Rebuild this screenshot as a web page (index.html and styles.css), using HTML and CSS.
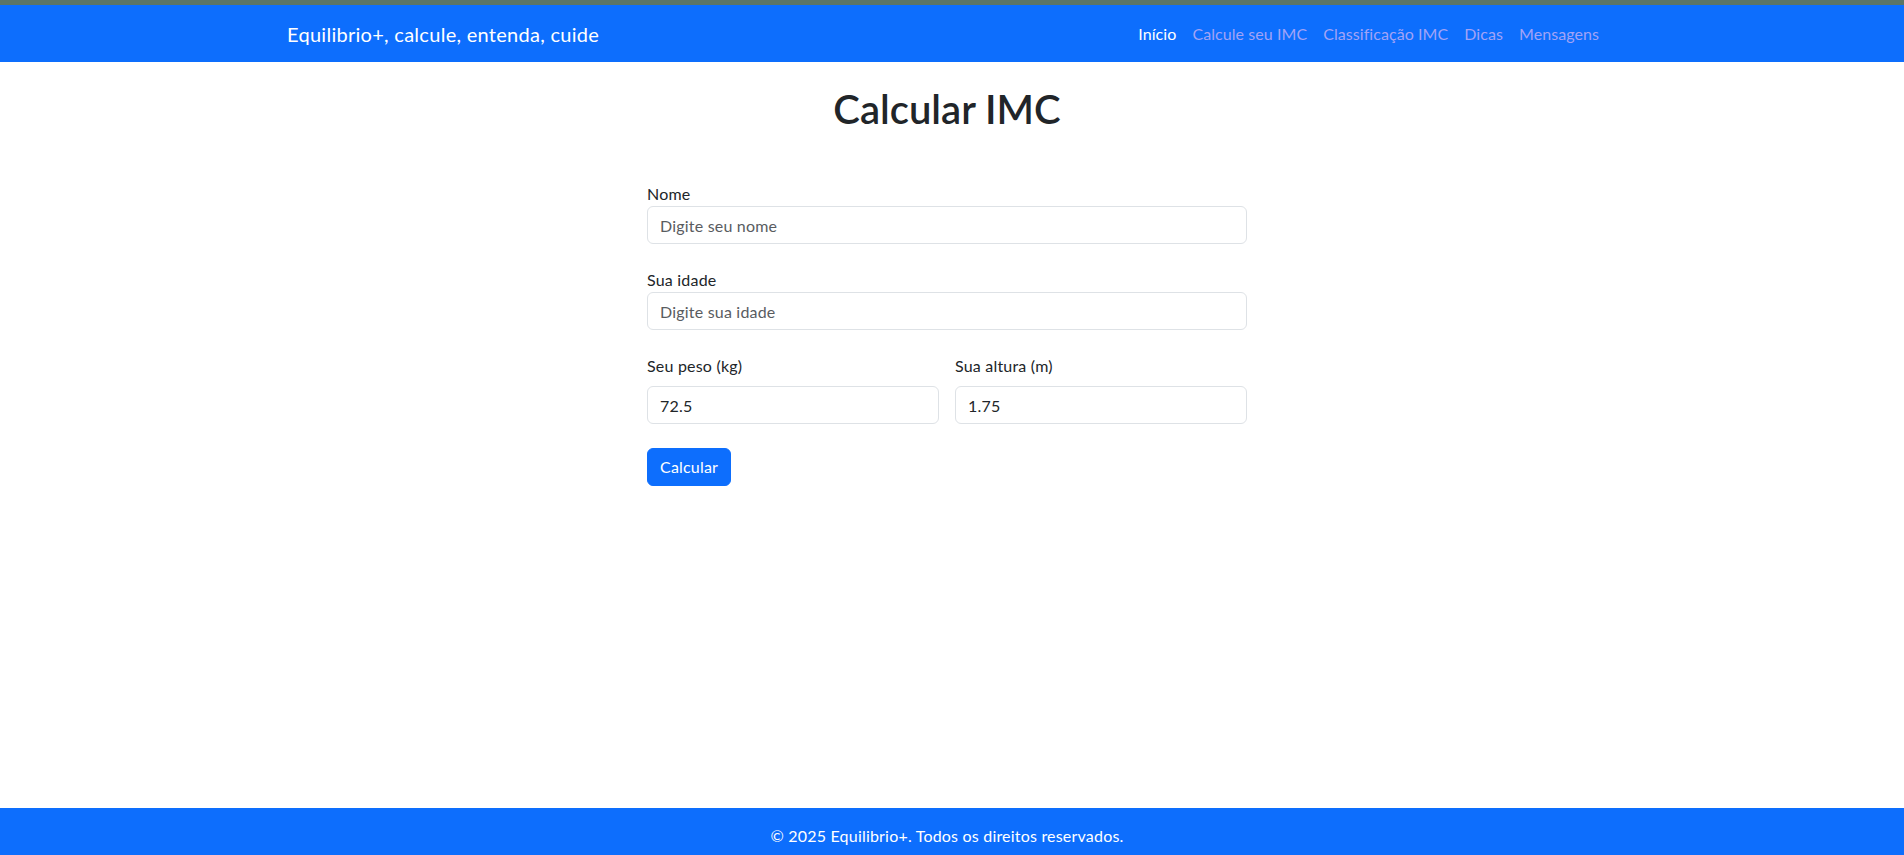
FILE: index.html
```html
<!DOCTYPE html>
<html lang="pt-BR">
<head>
<meta charset="utf-8">
<title>Calcular IMC - Equilibrio+</title>
<link rel="stylesheet" href="styles.css">
</head>
<body>
<div class="topstrip"></div>
<nav class="navbar">
  <div class="container nav-inner">
    <a class="brand" href="#">Equilibrio+, calcule, entenda, cuide</a>
    <ul class="nav-links">
      <li><a class="nav-link active" href="#">Início</a></li>
      <li><a class="nav-link" href="#">Calcule seu IMC</a></li>
      <li><a class="nav-link" href="#">Classificação IMC</a></li>
      <li><a class="nav-link" href="#">Dicas</a></li>
      <li><a class="nav-link" href="#">Mensagens</a></li>
    </ul>
  </div>
</nav>
<main class="main">
  <div class="container">
    <h1 class="title">Calcular IMC</h1>
    <form class="imc-form">
      <div class="field">
        <label class="label" for="nome">Nome</label>
        <input class="input" id="nome" type="text" placeholder="Digite seu nome">
      </div>
      <div class="field">
        <label class="label" for="idade">Sua idade</label>
        <input class="input" id="idade" type="text" placeholder="Digite sua idade">
      </div>
      <div class="field-row">
        <div class="col">
          <label class="label label-spaced" for="peso">Seu peso (kg)</label>
          <input class="input" id="peso" type="text" value="72.5">
        </div>
        <div class="col">
          <label class="label label-spaced" for="altura">Sua altura (m)</label>
          <input class="input" id="altura" type="text" value="1.75">
        </div>
      </div>
      <button class="btn" type="button">Calcular</button>
    </form>
  </div>
</main>
<footer class="footer">
  <p class="footer-text">© 2025 Equilibrio+. Todos os direitos reservados.</p>
</footer>
</body>
</html>
```
FILE: styles.css
```css
* { box-sizing: border-box; }

html, body { margin: 0; padding: 0; }

body {
  font-family: "Lato", "Roboto", "Liberation Sans", sans-serif;
  font-size: 16px;
  line-height: 1.5;
  color: #212529;
  background: #fff;
  display: flex;
  flex-direction: column;
  min-height: calc(100vh + 9px);
}

.topstrip {
  height: 5px;
  background: #5b7565;
  flex: none;
}

.container {
  box-sizing: content-box;
  max-width: 1320px;
  margin: 0 auto;
  padding: 0 22px 0 12px;
}

.navbar {
  background: #0d6efd;
  height: 57px;
  flex: none;
  display: flex;
  align-items: center;
}

.nav-inner {
  flex: 1;
  display: flex;
  align-items: center;
  justify-content: space-between;
}

.brand {
  color: #fff;
  font-size: 20px;
  line-height: 30px;
  letter-spacing: 0.28px;
  text-decoration: none;
  white-space: nowrap;
}

.nav-links {
  list-style: none;
  margin: 0;
  padding: 0;
  display: flex;
}

.nav-link {
  display: block;
  padding: 8px 8px;
  color: #a2a3f6;
  text-decoration: none;
  font-size: 16px;
  line-height: 24px;
  letter-spacing: 0.07px;
}

.nav-link.active { color: #fff; }

.main {
  flex: 1;
}

.title {
  margin: 23px 0 0;
  font-size: 40px;
  font-weight: 600;
  line-height: 48px;
  text-align: center;
  color: #212529;
}

.imc-form {
  width: 600px;
  margin: 49px auto 0;
}

.field {
  margin-bottom: 24px;
}

.field-row {
  display: grid;
  grid-template-columns: 1fr 1fr;
  column-gap: 16px;
  margin-bottom: 24px;
}

.label {
  display: block;
  font-size: 16px;
  line-height: 24px;
  letter-spacing: 0.2px;
  color: #212529;
}

.label-spaced { margin-bottom: 8px; }

.input {
  display: block;
  width: 100%;
  height: 38px;
  padding: 6px 12px;
  font-family: inherit;
  font-size: 16px;
  line-height: 24px;
  letter-spacing: 0.2px;
  color: #212529;
  background: #fff;
  border: 1px solid #dee2e6;
  border-radius: 6px;
  outline: none;
}

.input::placeholder { color: #595c5f; opacity: 1; }

.btn {
  display: inline-block;
  height: 38px;
  padding: 6px 12px;
  min-width: 84px;
  font-family: inherit;
  font-size: 16px;
  line-height: 24px;
  letter-spacing: 0.2px;
  color: #fff;
  background: #0d6efd;
  border: 1px solid #0d6efd;
  border-radius: 6px;
  cursor: pointer;
}

.footer {
  flex: none;
  background: #0d6efd;
  color: #fff;
  padding: 16px 10px 16px 0;
  text-align: center;
}

.footer-text {
  margin: 0;
  font-size: 16px;
  line-height: 24px;
  letter-spacing: 0.2px;
}
```
